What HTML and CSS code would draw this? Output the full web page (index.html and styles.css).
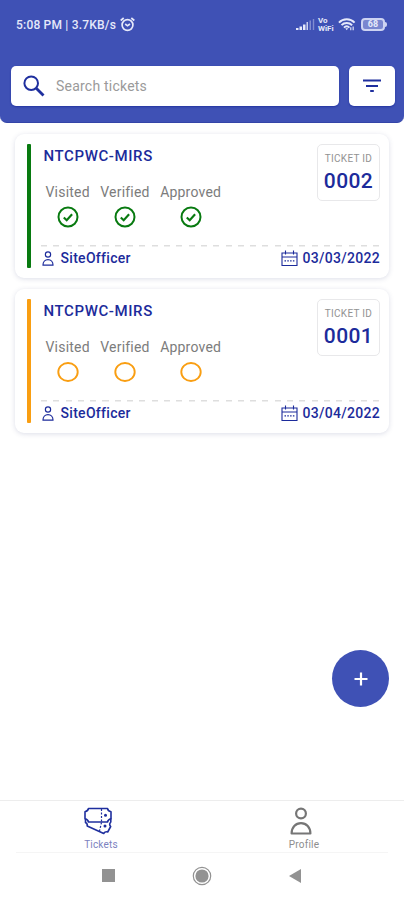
FILE: index.html
```html
<!DOCTYPE html>
<html lang="en">
<head>
<meta charset="utf-8">
<title>Tickets</title>
<link rel="stylesheet" href="styles.css">
</head>
<body>
<svg class="defs" width="0" height="0" aria-hidden="true">
  <symbol id="check" viewBox="0 0 22 22"><circle cx="11" cy="11" r="9.500" fill="none" stroke="currentColor" stroke-width="2"/><path d="M6.800 11.400l2.900 2.800 5.400-6" fill="none" stroke="currentColor" stroke-width="2.100"/></symbol>
  <symbol id="ring" viewBox="0 0 22 22"><ellipse cx="11" cy="11" rx="9.700" ry="9" fill="none" stroke="currentColor" stroke-width="1.900"/></symbol>
  <symbol id="person" viewBox="0 0 22 28"><circle cx="11" cy="6.500" r="4.900" fill="none" stroke="currentColor" stroke-width="2.200"/><path d="M1.600 26.500c0-6 4-10.300 9.400-10.300s9.400 4.300 9.400 10.300z" fill="none" stroke="currentColor" stroke-width="2.200" stroke-linejoin="round"/></symbol>
  <symbol id="calendar" viewBox="0 0 17 17"><path d="M1 3h15v12.500H1zM1 7h15M4.500 .5v4M12.500 .5v4" fill="none" stroke="currentColor" stroke-width="1.100"/><path d="M3.500 10.800h10.500" fill="none" stroke="currentColor" stroke-width="1.300" stroke-dasharray="1.500 1.300"/></symbol>
</svg>
<header class="header">
  <div class="status">
    <span class="clock">5:08 PM | 3.7KB/s</span>
    <svg class="alarm" width="15" height="15" viewBox="0 0 15 15" fill="none" stroke="currentColor" stroke-width="1.700"><circle cx="7.500" cy="8" r="5.400"/><path d="M.7 3.500L3.700 1M14.300 3.500L11.300 1M5.200 7l2.300 1.800L10 7"/></svg>
    <svg class="signal" width="19" height="13" viewBox="0 0 19 13" fill="currentColor"><path d="M0 10h2.500v2H0zM3.500 8.500H6V12H3.500zM7 6.500h2.500V12H7z"/><path opacity=".85" d="M10.500 4H12v8h-1.500z"/><path opacity=".4" d="M13.500 2.500H15V12h-1.500zM16.800 1h1.400v11h-1.400z"/></svg>
    <span class="carrier"><span>Vo</span><span>WiFi</span></span>
    <svg class="wifi" width="18" height="15" viewBox="0 0 19 15" fill="none" stroke="currentColor" stroke-width="2.100"><path d="M1 5.500c4.500-4.600 12-4.600 16.500 0M3.700 8.200c3-3 8-3 11.200 0M6.300 10.800c1.800-1.700 4-1.700 5.800 0"/><path d="M7.700 11.500h3L9.200 13.500z" fill="currentColor" stroke="none"/><path d="M13.500 10.500v3M16 9.500v4" stroke-width="1.200"/></svg>
    <span class="battery">68</span>
  </div>
  <div class="tools">
    <div class="search">
      <svg width="22" height="22" viewBox="0 0 22 22" fill="none" stroke="#1f2f9e"><circle cx="8.200" cy="8.200" r="6.800" stroke-width="2"/><path d="M13 13l7.500 7.500" stroke-width="2.800"/></svg>
      <span>Search tickets</span>
    </div>
    <div class="filter"><svg width="20" height="14" viewBox="0 0 20 14" fill="none" stroke="#1f2f9e" stroke-width="1.900"><path d="M1 1.500h18M4 7h12M8.200 12h3.600"/></svg></div>
  </div>
</header>
<main class="list">
  <article class="card done">
    <div class="bar"></div>
    <div class="body">
      <div class="top">
        <div class="info">
          <h2>NTCPWC-MIRS</h2>
          <div class="steps">
            <div><span>Visited</span><svg><use href="#check"/></svg></div>
            <div><span>Verified</span><svg><use href="#check"/></svg></div>
            <div><span>Approved</span><svg><use href="#check"/></svg></div>
          </div>
        </div>
        <div class="ticket"><small>TICKET ID</small><b>0002</b></div>
      </div>
      <div class="foot">
        <svg class="user"><use href="#person"/></svg><span class="name">SiteOfficer</span>
        <svg class="cal"><use href="#calendar"/></svg><span class="date">03/03/2022</span>
      </div>
    </div>
  </article>
  <article class="card open">
    <div class="bar"></div>
    <div class="body">
      <div class="top">
        <div class="info">
          <h2>NTCPWC-MIRS</h2>
          <div class="steps">
            <div><span>Visited</span><svg><use href="#ring"/></svg></div>
            <div><span>Verified</span><svg><use href="#ring"/></svg></div>
            <div><span>Approved</span><svg><use href="#ring"/></svg></div>
          </div>
        </div>
        <div class="ticket"><small>TICKET ID</small><b>0001</b></div>
      </div>
      <div class="foot">
        <svg class="user"><use href="#person"/></svg><span class="name">SiteOfficer</span>
        <svg class="cal"><use href="#calendar"/></svg><span class="date">03/04/2022</span>
      </div>
    </div>
  </article>
</main>
<div class="fab"><svg width="14" height="14" viewBox="0 0 14 14" stroke="#fff" stroke-width="2.200"><path d="M7 .5v13M.5 7h13"/></svg></div>
<nav class="tabs">
  <div class="tab active">
    <svg width="31" height="28" viewBox="0 0 31 28" fill="none" stroke="currentColor" stroke-width="1.600" stroke-linejoin="round"><path d="M5.500 1.500h19c.3 1.700 1.300 2.700 3.500 3.200v7c-2.200.5-3.200 1.500-3.500 3.300h-19C5.200 13.200 4 12.200 2 11.700v-7C4 4.200 5.200 3.200 5.500 1.500z"/><path d="M2.500 12v3.500c1.500.8 2 2 1.700 3.500l16.500 7.500c1-1.600 2.300-2 4-1.500l3-5.500c-1.400-1.300-1.400-3 .1-4.500v-3.500"/><path d="M18.500 2v12.500M18.500 15.500l-2 8.500" stroke-width="1.200" stroke-dasharray="2 1.500"/><circle cx="22.500" cy="8.300" r="1.500" fill="currentColor" stroke="none"/><circle cx="22" cy="19" r="1.500" fill="currentColor" stroke="none"/></svg>
    <span>Tickets</span>
  </div>
  <div class="tab profile">
    <svg width="22" height="28"><use href="#person"/></svg>
    <span>Profile</span>
  </div>
</nav>
<footer class="system">
  <svg width="13" height="13"><rect width="13" height="13" fill="#929292"/></svg>
  <svg width="20" height="20" viewBox="0 0 20 20"><circle cx="10" cy="10" r="8.700" fill="none" stroke="#929292" stroke-width="1.200"/><circle cx="10" cy="10" r="6.600" fill="#929292"/></svg>
  <svg width="12" height="14" viewBox="0 0 12 14"><path d="M12 0v14L0 7z" fill="#929292"/></svg>
</footer>
</body>
</html>
```
FILE: styles.css
```css
* { box-sizing: border-box; }
body {
  margin: 0;
  width: 404px;
  height: 900px;
  overflow: hidden;
  display: flex;
  flex-direction: column;
  background: #fff;
  font-family: Roboto, "Liberation Sans", sans-serif;
}
svg { display: block; flex: none; }
.defs { position: absolute; }
.header {
  height: 123px;
  flex: none;
  background: #3f51b5;
  border-radius: 0 0 7px 7px;
  border-bottom: 1px solid #3445a8;
}
.status {
  display: flex;
  align-items: center;
  height: 66px;
  padding: 0 17px 17px 16px;
  color: #e6e9fa;
}
.clock { font-size: 12px; font-weight: 500; letter-spacing: .2px; width: 104px; white-space: nowrap; }
.signal { margin-left: auto; }
.carrier {
  display: flex;
  flex-direction: column;
  margin: 0 4px 0 3px;
  width: 16px;
  font-size: 8px;
  line-height: 7.500px;
  font-weight: 700;
}
.wifi { margin-right: 5px; }
.battery {
  position: relative;
  width: 24px;
  height: 13px;
  margin-right: 2px;
  border: 2px solid #cdd3f2;
  border-radius: 4px;
  background: #7986d0;
  font-size: 9px;
  line-height: 9px;
  font-weight: 700;
  text-align: center;
}
.battery::after {
  content: "";
  position: absolute;
  right: -4px;
  top: 2px;
  width: 2px;
  height: 5px;
  border-radius: 0 2px 2px 0;
  background: #cdd3f2;
}
.tools { display: flex; gap: 10px; padding: 0 9px 0 11px; }
.search, .filter {
  height: 40px;
  background: #fff;
  border-radius: 5px;
  box-shadow: 0 1px 2px #2435a0;
  display: flex;
  align-items: center;
}
.search { flex: 1; padding-left: 12px; gap: 11px; color: #9a9a9a; font-size: 14px; letter-spacing: .22px; }
.filter { width: 46px; justify-content: center; }
.list { display: flex; flex-direction: column; gap: 11px; padding: 11px 15px 0; }
.card {
  height: 144px;
  display: flex;
  gap: 10px;
  padding: 10px 9px 10px 12px;
  border-radius: 9px;
  background: #fff;
  box-shadow: 0 1px 5px rgba(50, 60, 120, .17);
}
.bar { width: 3.500px; border-radius: 1px; flex: none; }
.done .bar { background: #087a10; }
.open .bar { background: #f99e12; }
.done .steps { color: #087a10; }
.open .steps { color: #f99e12; }
.body { flex: 1; min-width: 0; color: #1c2b9b; }
.top { display: flex; justify-content: space-between; height: 101px; }
h2 { margin: 3px 0 0 3px; font-size: 15px; line-height: 18px; font-weight: 500; letter-spacing: .6px; }
.steps { display: flex; gap: 10.500px; margin: 18px 0 0 5px; }
.steps div { display: flex; flex-direction: column; align-items: center; gap: 5px; }
.steps span { color: #7c7c7c; font-size: 14px; line-height: 18px; letter-spacing: .2px; }
.steps svg { width: 22px; height: 22px; }
.ticket {
  width: 63px;
  height: 57px;
  border: 1.500px solid #e8e8ea;
  border-radius: 5px;
  display: flex;
  flex-direction: column;
  align-items: center;
  padding-top: 7px;
}
.ticket small { font-size: 10px; line-height: 14px; color: #929292; letter-spacing: .3px; }
.ticket b { font-size: 21px; line-height: 30px; font-weight: 500; letter-spacing: .4px; }
.foot {
  display: flex;
  align-items: center;
  height: 26px;
  padding: 0 0 0 1px;
  font-size: 14px;
  font-weight: 500;
  background: repeating-linear-gradient(90deg, #dedede 0 6px, transparent 6px 12.300px) top / 100% 1.500px no-repeat;
}
.user { width: 12px; height: 15px; margin-right: 7px; }
.name { letter-spacing: .3px; }
.cal { width: 17px; height: 17px; margin: 0 4px 0 auto; }
.date { letter-spacing: .3px; }
.fab {
  width: 57px;
  height: 57px;
  border-radius: 50%;
  background: #3f51b5;
  margin: auto 15px 93px auto;
  display: flex;
  align-items: center;
  justify-content: center;
}
.tabs { height: 52px; flex: none; display: flex; border-top: 1px solid #ededed; }
.tab {
  width: 203px;
  display: flex;
  flex-direction: column;
  align-items: center;
  padding-top: 6px;
  gap: 4px;
  font-size: 10px;
  line-height: 12px;
  color: #767676;
}
.tab svg { margin-right: 6px; }
.profile svg { margin-right: 4px; }
.tab span { color: #8d8d8d; letter-spacing: .2px; }
.profile span { margin-left: 2px; }
.tab.active { color: #1f2f9e; }
.tab.active span { color: #7c82c0; }
.system {
  height: 48px;
  flex: none;
  display: flex;
  align-items: center;
  justify-content: space-between;
  margin: 0 16px;
  padding: 0 87px 2px 86px;
  border-top: 1px solid #f5f5f5;
}
```
